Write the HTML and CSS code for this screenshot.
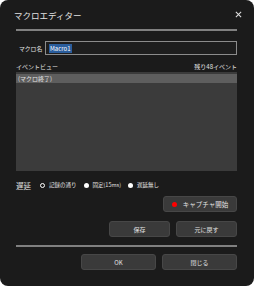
FILE: index.html
```html
<!DOCTYPE html>
<html lang="ja">
<head>
    <meta charset="UTF-8">
    <meta name="viewport" content="width=device-width, initial-scale=1.0">
    <title>マクロエディター</title>
    <link rel="stylesheet" href="styles.css">
</head>
<body>
    <div class="dialog">
        <div class="titlebar">
            <span class="title">マクロエディター</span>
            <svg class="close" viewBox="0 0 8 8" width="7" height="7">
                <path d="M1 1 L7 7 M7 1 L1 7" stroke="#e0e0e0" stroke-width="1.2"></path>
            </svg>
        </div>
        <div class="rule"></div>

        <div class="name-row">
            <span class="label">マクロ名</span>
            <div class="input"><span class="sel">Macro1</span></div>
        </div>

        <div class="event-head">
            <span>イベントビュー</span>
            <span>残り48イベント</span>
        </div>
        <div class="listbox">
            <div class="item selected">(マクロ終了)</div>
        </div>

        <div class="delay-row">
            <span class="label">遅延</span>
            <span class="radio checked"><i></i>記録の通り</span>
            <span class="radio"><i></i>固定(15ms)</span>
            <span class="radio"><i></i>遅延無し</span>
        </div>

        <div class="btn-row capture-row">
            <button class="btn capture"><span class="dot"></span>キャプチャ開始</button>
        </div>
        <div class="btn-row">
            <button class="btn small">保存</button>
            <button class="btn small">元に戻す</button>
        </div>

        <div class="rule bottom-rule"></div>
        <div class="btn-row">
            <button class="btn wide">OK</button>
            <button class="btn wide">閉じる</button>
        </div>
    </div>
</body>
</html>
```
FILE: styles.css
```css
body {
    margin: 0;
    background: #ffffff;
    font-family: "Noto Sans CJK JP", "Noto Sans", sans-serif;
    color: #e2e2e2;
}

.dialog {
    width: 254px;
    height: 286px;
    box-sizing: border-box;
    background: #1b1b1b;
    border-radius: 8px;
    padding: 0 17px 0 16px;
    font-size: 6px;
}

.titlebar {
    display: flex;
    justify-content: space-between;
    align-items: center;
    height: 29px;
    margin-left: -2px;
    margin-right: -5px;
}

.title {
    font-size: 8.5px;
}

.rule {
    height: 2px;
    background: #808080;
}

.name-row {
    display: flex;
    align-items: center;
    margin-top: 10px;
    height: 14px;
}

.name-row .label {
    width: 29px;
    padding-left: 3px;
    box-sizing: border-box;
    font-size: 5.8px;
}

.input {
    flex: 1;
    height: 14px;
    box-sizing: border-box;
    border: 1px solid #8c8c8c;
    background: #1e1e1e;
    display: flex;
    align-items: center;
    padding-left: 3px;
}

.sel {
    background: #2a5d9c;
    color: #ffffff;
    padding: 0 1px;
    line-height: 9px;
}

.event-head {
    display: flex;
    justify-content: space-between;
    margin-top: 6px;
    height: 11px;
    line-height: 11px;
}

.listbox {
    height: 99px;
    background: #3b3b3b;
    padding-top: 2px;
    box-sizing: border-box;
}

.item {
    height: 9px;
    line-height: 9px;
    padding-left: 2px;
}

.item.selected {
    background: #5e5e5e;
}

.delay-row {
    display: flex;
    align-items: center;
    margin-top: 8px;
    height: 12px;
}

.delay-row .label {
    width: 24px;
    font-size: 7.5px;
}

.radio {
    display: flex;
    align-items: center;
    margin-right: 7px;
    font-size: 5.5px;
}

.radio i {
    width: 5px;
    height: 5px;
    border-radius: 50%;
    background: #ffffff;
    margin-right: 4px;
}

.radio.checked i {
    width: 3px;
    height: 3px;
    background: #1b1b1b;
    border: 1.5px solid #ffffff;
}

.btn-row {
    display: flex;
    justify-content: flex-end;
    gap: 6px;
    margin-top: 9px;
}

.capture-row {
    margin-top: 5px;
}

.btn {
    height: 16px;
    background: #3a3a3a;
    border: 1px solid #474747;
    border-radius: 3px;
    color: #e2e2e2;
    font-family: inherit;
    font-size: 6px;
    padding: 0;
    display: flex;
    align-items: center;
    justify-content: center;
}

.capture {
    width: 74px;
    font-size: 6.5px;
}

.dot {
    width: 5px;
    height: 5px;
    border-radius: 50%;
    background: #ff0000;
    margin-right: 6px;
}

.small {
    width: 61px;
}

.wide {
    width: 75px;
}

.bottom-rule {
    margin-top: 8px;
}

.bottom-rule + .btn-row {
    margin-top: 7px;
}
```
